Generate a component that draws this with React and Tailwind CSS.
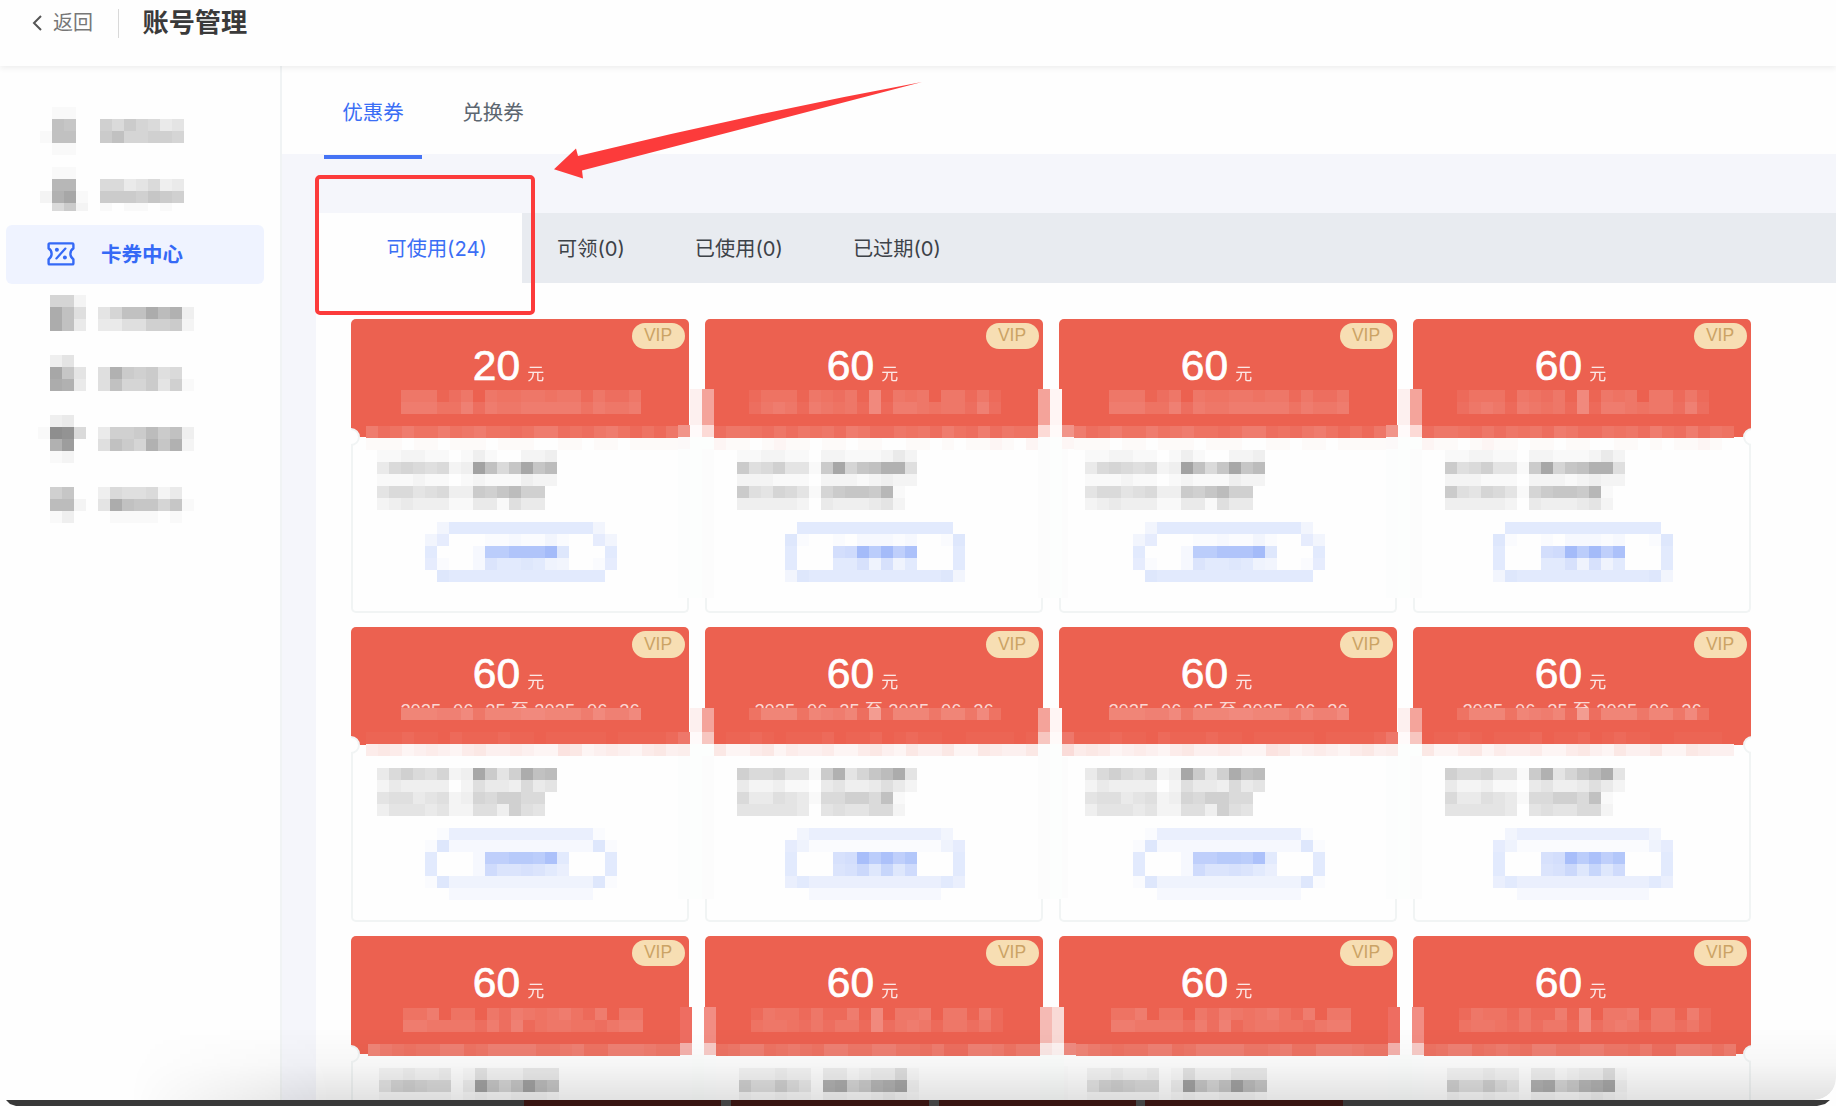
import React from 'react';

const TONES = {
  white: { cls: 'bg-white', div: 35 },
  red: { cls: 'bg-[#ec6150]', div: 35 },
  dark: { cls: 'bg-black', div: 50 },
  blue: { cls: 'bg-[#3b6ef5]', div: 50 },
};

/* A block of 12px squares; every character is a base-36 strength. */
function Mosaic({ rows, tone = 'dark', className = '' }) {
  const { cls, div } = TONES[tone];
  return (
    <div className={`flex flex-col ${className}`}>
      {rows.map((row, r) => (
        <div key={r} className="flex h-3">
          {[...row].map((c, i) => (
            <span key={i} className={`h-3 w-3 shrink-0 ${cls}`} style={{ opacity: parseInt(c, 36) / div }} />
          ))}
        </div>
      ))}
    </div>
  );
}

function TicketIcon() {
  return (
    <svg className="h-6 w-7" viewBox="0 0 28 24" fill="none" stroke="currentColor" strokeWidth="2.4" strokeLinejoin="round" strokeLinecap="round">
      <path d="M1.6 2.4a1 1 0 0 1 1-1h22.8a1 1 0 0 1 1 1V6.4C24.4 7.6 23.4 9.4 23.4 11.8S24.4 16 26.4 17.2v4.2a1 1 0 0 1-1 1H2.6a1 1 0 0 1-1-1V17.2C3.6 16 4.6 14.2 4.6 11.8S3.6 7.6 1.6 6.4z" />
      <path d="M18.4 6.6 9.4 16.4" strokeWidth="2.2" />
      <circle cx="9.9" cy="7.7" r="2" fill="currentColor" stroke="none" />
      <circle cx="17.9" cy="15.4" r="2" fill="currentColor" stroke="none" />
    </svg>
  );
}

function SideItem({ icon, label, className }) {
  return (
    <div className={`flex gap-3 ${className}`}>
      <Mosaic rows={icon} />
      <Mosaic rows={label} />
    </div>
  );
}

function Sidebar() {
  return (
    <aside className="w-[282px] shrink-0 border-r-2 border-[#f0f3f4] bg-[#fefefe]">
      <SideItem className="ml-10 mt-[41px] h-12" icon={['0110', '0cb0', '1cc0', '0110']} label={['0000000', '97a8745', 'ac88998', '0000000']} />
      <SideItem className="ml-10 mt-3 h-11 overflow-hidden" icon={['0110', '0ee0', '2fh1', '07a2']} label={['0000000', '7745734', 'aaa9ba9', '1011010']} />
      <div className="ml-1.5 mt-3.5 flex h-[59px] w-[258px] items-center rounded-md bg-[#eff3ff] text-[#3569f6]">
        <span className="-mt-0.5 ml-[41px]">
          <TicketIcon />
        </span>
        <span className="ml-[26px] mt-0.5 text-[20.5px] font-bold">卡券中心</span>
      </div>
      <SideItem className="ml-[37.5px] mt-[11px] h-9" icon={['0882', '0gc6', '0gc4']} label={['00000000', '58ccgdf3', '446699a2']} />
      <SideItem className="ml-[37.5px] mt-6 h-12" icon={['0350', '0hb5', '0gf4', '0000']} label={['00000000', '6fa9a670', '6c88a591', '00000000']} />
      <SideItem className="ml-[37.5px] mt-3 h-12" icon={['0340', '1ml7', '0fj0', '0120']} label={['00000000', '499adac3', '6ca8fbf2', '00000000']} />
      <SideItem className="ml-[37.5px] mt-6 h-9" icon={['09b0', '0dd2', '0130']} label={['37667240', '5gcbb8b1', '01111010']} />
    </aside>
  );
}

/* Pixelated strips per card row and per card parity. */
const PATTERNS = {
  A: {
    odd: {
      date: ['55513505445545525335', '66644736556666646556'],
      seam: '634644645644346634356424253',
      under: '111011011101110011011011112',
      text: ['112211013100223', '47876723ic7bhbd', '111211012111322', '57756733a9bd990', '234333114416440'],
      button: ['0377777777777730', '3600011211310063', '70002hhkkkn80007', '6100297787430016', '0877777777777770'],
    },
    even: {
      date: ['244415435191545055252', '356526545292665455373'],
      seam: '355435354536533545364363544',
      under: '211012110110110011010112102',
      text: ['112211022111242', 'a679551ah8bcff6', '222111022212322', 'a6587518abbae10', '333332043334520'],
      button: ['077777777777770', '810010222120018', '7000bcnhngl0007', '700077a4a470007', '387777777777783'],
    },
  },
  B: {
    odd: {
      date: ['88877958889988869779'],
      seam: '111211021112110111110111121',
      under: '454234324533432265234324533',
      text: ['47976823ha59gcd', '243333026443745', '566456238799770', '355545226639650'],
      button: ['0155555555555510', '1822222222222281', '70002ggiihl70007', '70002c99a9750007', '1844444444444481', '0022222222222200'],
    },
    even: {
      date: ['4888487683d3888588594'],
      seam: '011210111201120121100111101',
      under: '522452433422453253352254335',
      text: ['9778551af58bdg5', '422311045334642', '744654177997c10', '555554056557720'],
      button: ['035555555555530', '641111111111146', '7000abmhlgj0007', '70009ad8e8c0007', '575555555555575', '002222222222200'],
    },
  },
  C: {
    odd: {
      date: ['44604405365456426055', '66555536372455443566'],
      seam: '865455774577775567447776555',
      under: '000000000000000000000000000',
      text: ['223223015222444', '58987703ib8bidb', '111111012112221'],
      button: [],
    },
    even: {
      date: ['254425226190556055162', '455435355293565255352'],
      seam: '457745654775577554633776466',
      under: '000000000000000000000000000',
      text: ['222322033123361', '9669640fg8aefh2', '211211022112321'],
      button: [],
    },
  },
};

function Gutter({ cells }) {
  return (
    <div className="flex">
      {cells.map((c, i) => (
        <span key={i} className={`w-3 ${c}`} />
      ))}
    </div>
  );
}

/* Pixelated columns that bridge the space between neighbouring cards. */
function Gutters({ variant, odd }) {
  if (variant === 'C') {
    return odd ? (
      <div className="absolute left-[328.7px] top-[71.7px]">
        <Gutter cells={['h-9 bg-[#ee6d61]', 'h-9 bg-[#fefefe]', 'h-9 bg-[#f28d83]']} />
        <Gutter cells={['h-3 bg-[#f5b2ad]', 'h-3 bg-[#fefefe]', 'h-3 bg-[#f8cbc7]']} />
        <Gutter cells={['h-20 bg-[#fdfefe]', 'h-20 bg-[#fcfefd]', 'h-20 bg-[#fdfefe]']} />
      </div>
    ) : (
      <div className="absolute left-[334.7px] top-[71.7px]">
        <Gutter cells={['h-9 bg-[#f5bab4]', 'h-9 bg-[#f9dad6]']} />
        <Gutter cells={['h-3 bg-[#fbe7e5]', 'h-3 bg-[#fdf2f1]', 'h-3 bg-[#f08b80]']} />
        <Gutter cells={['h-20 bg-[#fcfefd]', 'h-20 bg-[#fcfefd]']} />
      </div>
    );
  }
  const b = variant === 'B';
  const tall = b ? 'h-6' : 'h-9';
  const rest = b ? 'h-[143px]' : 'h-[149px]';
  return (
    <div className={`absolute ${odd ? 'left-[326.7px]' : 'left-[332.7px]'} ${b ? 'top-[80.4px]' : 'top-[70.7px]'}`}>
      {odd ? (
        <>
          <Gutter cells={[tall, `${tall} bg-[#fdf0ef]`, `${tall} bg-[#f4a49b]`]} />
          <Gutter cells={[b ? 'h-3 bg-[#ee776a]' : 'h-3 bg-[#f19489]', 'h-3 bg-[#fffafa]', b ? 'h-3 bg-[#f7c6c0]' : 'h-3 bg-[#fcdad6]']} />
          <Gutter cells={[b ? 'h-3 bg-[#fbeeec]' : 'h-3 bg-[#fcf9f9]', 'h-3 bg-[#fcfefd]', 'h-3 bg-[#fcfefd]']} />
          <Gutter cells={[`${rest} bg-[#fcfdfd]`, `${rest} bg-[#fcfefd]`, `${rest} bg-[#fcfcfc]`]} />
        </>
      ) : (
        <>
          <Gutter cells={[`${tall} bg-[#f4a39a]`, `${tall} bg-[#fff5f4]`]} />
          <Gutter cells={[b ? 'h-3 bg-[#f7c6c0]' : 'h-3 bg-[#fcdad6]', 'h-3 bg-[#fffaf9]', b ? 'h-3 bg-[#ee776a]' : 'h-3 bg-[#f19489]']} />
          <Gutter cells={['h-3 bg-[#fcfcfc]', 'h-3 bg-[#fcfefd]', b ? 'h-3 bg-[#fadcd9]' : 'h-3 bg-[#fdf6f5]']} />
          <Gutter cells={[`${rest} bg-[#fcfcfc]`, `${rest} bg-[#fcfefd]`]} />
        </>
      )}
    </div>
  );
}

const PLACE = {
  A: { date: 'top-[71px]', seam: 'top-[107px]', text: 'top-[131px]', button: 'top-[203px]', edge: 'h-[149.7px]' },
  B: { date: 'top-[80.4px]', seam: 'top-[104.4px]', text: 'top-[140.4px]', button: 'top-[200.4px]', edge: 'h-[141px]' },
  C: { date: 'top-[72px]', seam: 'top-[108px]', text: 'top-[132px]', button: 'top-[200px]', edge: 'h-40' },
};

const LAYERS = ['z-[4]', 'z-[3]', 'z-[2]', 'z-[1]'];

function Coupon({ amount, variant, index }) {
  const odd = index % 2 === 0;
  const last = index === 3;
  const p = PATTERNS[variant][odd ? 'odd' : 'even'];
  const at = PLACE[variant];
  const shift = variant === 'C' ? 'ml-0.5' : '';
  return (
    <article className={`relative flex h-[294.3px] w-[338px] shrink-0 flex-col ${LAYERS[index]}`}>
      <div className="flex h-[118px] shrink-0 flex-col items-center rounded-t-[5px] bg-[#ec6150]">
        <span className="mr-[4.5px] mt-[4px] flex h-[26.5px] w-[53px] items-center justify-center self-end rounded-full bg-[#f7deb3] pb-px text-[17.5px] text-[#cba365]">VIP</span>
        <div className="-mt-[5.5px] mr-[23px] flex h-11 items-baseline gap-[7px] text-white">
          <span className="text-[42.5px] leading-[44px] [-webkit-text-stroke:0.7px_white]">{amount}</span>
          <span className="text-[17px] leading-none opacity-85">元</span>
        </div>
        {variant === 'B' && (
          <p className="mt-[3.5px] flex whitespace-pre text-[18.4px] leading-[22px] text-white/75">
            2025<span className="tracking-[5.6px]">-</span>06<span className="tracking-[5.6px]">-</span>25 至 2025<span className="tracking-[5.6px]">-</span>06<span className="tracking-[5.6px]">-</span>26
          </p>
        )}
      </div>
      <div className="flex-1 rounded-b-[5px] border-x-2 border-b-2 border-[#f1f4f4] bg-[#fefefe]" />

      {index === 0 && (
        <span className="absolute -left-2.5 top-[109px] h-[18px] w-5 overflow-hidden">
          <span className="block h-[18px] w-[19px] rounded-full border-2 border-[#f1f4f4] bg-[#fefefe]" />
          <span className="absolute left-0 top-0 h-full w-2.5 bg-[#fefefe]" />
        </span>
      )}
      {last && (
        <span className="absolute -right-2.5 top-[109px] h-[18px] w-[18px] overflow-hidden">
          <span className="block h-[18px] w-[18px] rounded-full border-2 border-[#f1f4f4] bg-[#fefefe]" />
          <span className="absolute right-0 top-0 h-full w-2.5 bg-[#fefefe]" />
        </span>
      )}

      {variant === 'B' && <div className="absolute left-11 top-[80.4px] h-6 w-[252px] bg-[#ec6150]" />}
      <Mosaic tone="white" rows={p.date} className={`absolute ${at.date} ${shift} ${odd ? 'left-[50.4px]' : 'left-[44.4px]'}`} />
      <div className={`absolute ${at.seam} ${shift} ${odd ? 'left-[14.7px]' : 'left-[8.7px]'}`}>
        <div className="bg-[#ec6150]">
          <Mosaic tone="white" rows={[last ? p.seam.slice(0, 26) : p.seam]} />
        </div>
        <div className="bg-[#fefefe]">
          <Mosaic tone="red" rows={[last ? p.under.slice(0, 26) : p.under]} />
        </div>
      </div>
      <Mosaic rows={p.text} className={`absolute ${at.text} ${shift} ${odd ? 'left-[26.4px]' : 'left-[32.4px]'}`} />
      <Mosaic tone="blue" rows={p.button} className={`absolute ${at.button} ${odd ? 'left-[74.4px]' : 'left-[80.4px]'}`} />
      {!last && <Gutters variant={variant} odd={odd} />}
      {index > 0 && <div className={`absolute left-0 top-[130px] w-[8.7px] bg-[#fcfcfc] ${at.edge}`} />}
    </article>
  );
}

const COUPONS = [
  { variant: 'A', amounts: [20, 60, 60, 60] },
  { variant: 'B', amounts: [60, 60, 60, 60] },
  { variant: 'C', amounts: [60, 60, 60, 60] },
];

export default function App() {
  return (
    <div className="relative flex h-[1106px] w-[1836px] flex-col overflow-hidden bg-[#fefefe] font-['Liberation_Sans','Noto_Sans_CJK_SC',sans-serif]">
      <header className="z-10 flex h-[66px] shrink-0 items-center bg-[#fefefe] pb-[20px] shadow-[0_2px_6px_rgba(0,0,0,0.07)]">
        <svg className="ml-8 h-4 w-2.5 text-[#555]" viewBox="0 0 10 16" fill="none" stroke="currentColor" strokeWidth="2">
          <path d="M9 1 2 8l7 7" />
        </svg>
        <span className="ml-[11px] text-[20px] text-[#777]">返回</span>
        <span className="ml-[25px] h-[29px] w-px bg-[#d9d9d9]" />
        <h1 className="ml-[23.5px] pt-0.5 text-[26.2px] font-bold text-[#3a3a3a]">账号管理</h1>
      </header>

      <div className="flex min-h-0 flex-1">
        <Sidebar />
        <main className="flex min-w-0 flex-1 flex-col bg-[#f5f6fb]">
          <nav className="flex h-[88px] shrink-0 bg-[#fefefe] pl-[42px] text-[20.5px]">
            <div className="flex h-[93px] w-[98px] items-center justify-center border-b-4 border-[#4573f4] pt-[6px] text-[#3b6ef5]">优惠券</div>
            <div className="ml-[22px] flex h-[93px] w-[98px] items-center justify-center pt-[2px] text-[#5c6670]">兑换券</div>
          </nav>

          <section className="ml-[34px] mt-[59px] flex flex-1 flex-col bg-[#fefefe]">
            <div className="flex h-[70px] shrink-0 items-center bg-[#e8ebf0] font-['Inter','Noto_Sans_CJK_SC',sans-serif] text-[20.2px] text-[#3d4248]">
              <div className="flex h-full w-[206px] items-center bg-[#fefefe] pl-[70.5px] pt-0.5 text-[#3b6ef5]">可使用(24)</div>
              <div className="px-[35px] pt-0.5">可领(0)</div>
              <div className="px-[35px] pt-0.5">已使用(0)</div>
              <div className="px-[35px] pt-0.5">已过期(0)</div>
            </div>
            <div className="mt-[35.8px] flex flex-col gap-[14.2px] pl-[35px]">
              {COUPONS.map((row) => (
                <div key={row.variant} className="flex gap-4">
                  {row.amounts.map((amount, i) => (
                    <Coupon key={i} index={i} amount={amount} variant={row.variant} />
                  ))}
                </div>
              ))}
            </div>
          </section>
        </main>
      </div>

      {/* Annotation: highlighted tab and pointer */}
      <div className="absolute left-[315px] top-[175px] z-20 h-[140px] w-[220px] rounded-[5px] border-4 border-[#fc3b3b]" />
      <svg className="absolute left-[540px] top-[70px] z-20 h-[120px] w-[400px]" viewBox="540 70 400 120">
        <path d="M554 169.3 576 148.5 578 156Q750 114 922 82L582 170.5 583 178.5Z" fill="#fc3b3b" />
      </svg>

      {/* Window shadow and the strip below the window */}
      <div className="absolute bottom-1.5 left-0 right-0 z-20 h-[72px] rounded-br-[22px] bg-linear-to-b from-black/0 via-black/[0.03] to-black/[0.11] mask-[linear-gradient(to_right,transparent_130px,black_330px)]" />
      <div className="absolute bottom-0 left-0 z-20 flex h-1.5 w-full bg-[#393939] pl-[524px] [clip-path:polygon(6px_0,1830px_0,1825px_4px,1817px_100%,16px_100%,10px_4px)]">
        <span className="w-[197px] bg-[#391512]" />
        <span className="w-[10px] bg-[#444]" />
        <span className="w-[198px] bg-[#391512]" />
        <span className="w-[10px] bg-[#444]" />
        <span className="w-[197px] bg-[#391512]" />
        <span className="w-[9px] bg-[#444]" />
        <span className="w-[198px] bg-[#391512]" />
      </div>
    </div>
  );
}
